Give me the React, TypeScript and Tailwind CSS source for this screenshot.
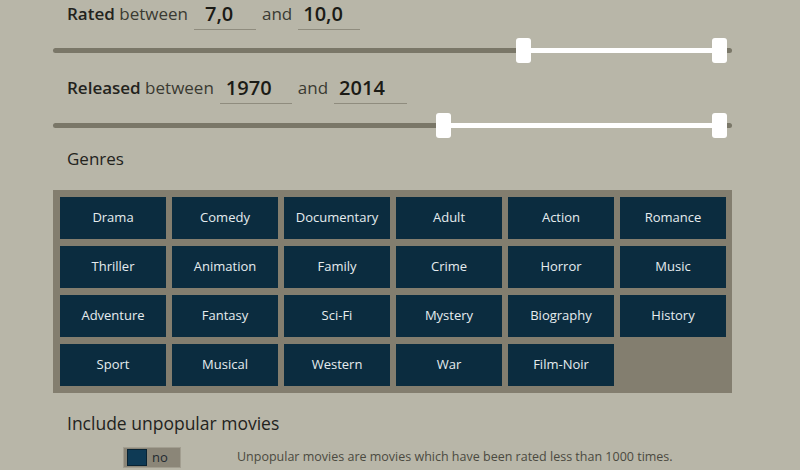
import type { ReactNode } from 'react'

const genres = [
  'Drama', 'Comedy', 'Documentary', 'Adult', 'Action', 'Romance',
  'Thriller', 'Animation', 'Family', 'Crime', 'Horror', 'Music',
  'Adventure', 'Fantasy', 'Sci-Fi', 'Mystery', 'Biography', 'History',
  'Sport', 'Musical', 'Western', 'War', 'Film-Noir',
]

type RangeProps = {
  from: number // left edge of the low handle, px from track start
  to: number // left edge of the high handle
}

function RangeSlider({ from, to }: RangeProps) {
  return (
    <div className="relative h-[25px] w-[679px]">
      <div className="absolute left-0 right-0 top-[10px] h-[5px] rounded-full bg-[#7a7768]" />
      <div
        className="absolute top-[10px] h-[5px] bg-white"
        style={{ left: from + 7, width: to - from }}
      />
      <div
        className="absolute top-0 h-[25px] w-[15px] rounded-[3px] bg-white"
        style={{ left: from }}
      />
      <div
        className="absolute top-0 h-[25px] w-[15px] rounded-[3px] bg-white"
        style={{ left: to }}
      />
    </div>
  )
}

function ValueBox({ value, width, pad }: { value: string; width: number; pad: string }) {
  return (
    <div
      className={`h-[30px] border-b border-[#8f8c7e] text-[20px] font-semibold leading-[28px] text-[#1b1b16] ${pad}`}
      style={{ width }}
    >
      {value}
    </div>
  )
}

function RangeRow({ label, children }: { label: string; children: ReactNode }) {
  return (
    <div className="flex h-[30px] items-start gap-[6px] pl-[14px]">
      <div className="mt-[2px] text-[17px] leading-[24px] text-[#3a3a32]">
        <span className="font-semibold text-[#23231d]">{label}</span> between
      </div>
      {children}
    </div>
  )
}

function And() {
  return <div className="mt-[2px] text-[17px] leading-[24px] text-[#3a3a32]">and</div>
}

export default function App() {
  return (
    <div className="h-[470px] w-[800px] overflow-hidden bg-[#b8b6a8] font-['Open_Sans',sans-serif]">
      <div className="flex flex-col pl-[53px]">
        <RangeRow label="Rated">
          <ValueBox value="7,0" width={62} pad="pl-[11px]" />
          <And />
          <ValueBox value="10,0" width={62} pad="pl-[5px]" />
        </RangeRow>
        <div className="mt-[8px]">
          <RangeSlider from={463} to={659} />
        </div>

        <div className="mt-[11px]">
          <RangeRow label="Released">
            <ValueBox value="1970" width={72} pad="pl-[6px]" />
            <And />
            <ValueBox value="2014" width={73} pad="pl-[5px]" />
          </RangeRow>
        </div>
        <div className="mt-[9px]">
          <RangeSlider from={383} to={659} />
        </div>

        <div className="mt-[9px] pl-[14px] text-[17px] leading-[24px] text-[#23231d]">Genres</div>

        <div className="mt-[19px] grid w-[679px] grid-cols-[repeat(6,106px)] gap-x-[6px] gap-y-[7px] bg-[#837e6f] py-[7px] pl-[7px] pr-[6px]">
          {genres.map((g) => (
            <button
              key={g}
              type="button"
              className="flex h-[42px] items-center justify-center bg-[#0b2c3f] text-[13px] text-[#e6ecef]"
            >
              {g}
            </button>
          ))}
        </div>

        <div className="mt-[18px] pl-[14px] text-[17.5px] leading-[24px] text-[#23231d]">
          Include unpopular movies
        </div>

        <div className="mt-[12px] flex items-center">
          <div className="ml-[70px] flex h-[21px] w-[58px] items-center border border-[#a29e90] bg-[#8b8678] pl-[3px]">
            <div className="h-[17px] w-[20px] border border-[#082333] bg-[#0e3a55]" />
            <span className="ml-[5px] text-[13px] leading-none text-[#1f2a30]">no</span>
          </div>
          <div className="ml-[56px] text-[12.5px] text-[#4b4a40]">
            Unpopular movies are movies which have been rated less than 1000 times.
          </div>
        </div>
      </div>
    </div>
  )
}
